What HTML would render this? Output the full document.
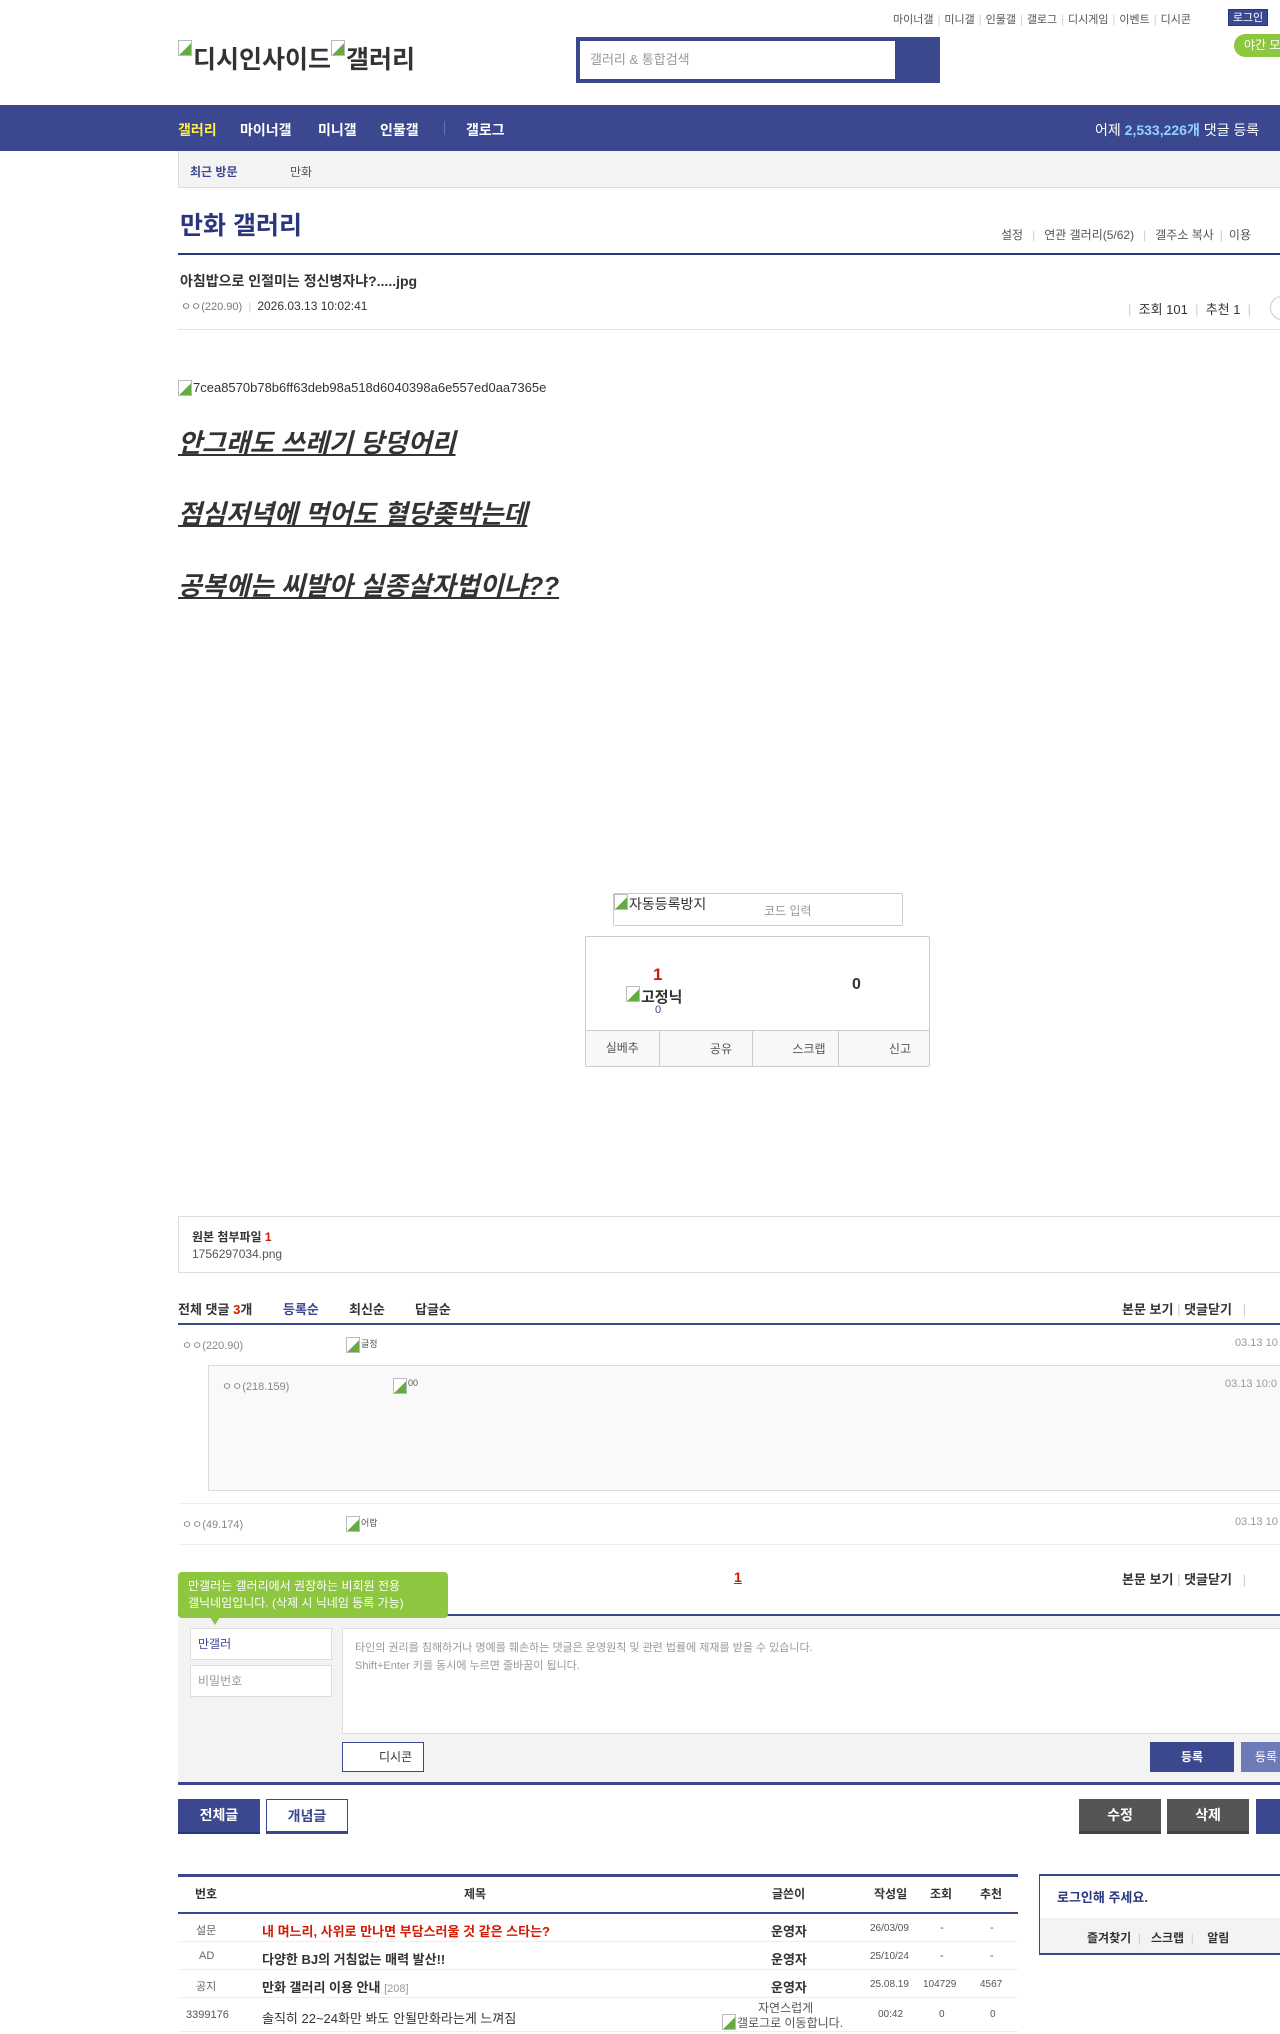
<!DOCTYPE html>
<html><head><meta charset="utf-8">
<style>
*{margin:0;padding:0;box-sizing:border-box}
html,body{width:1280px;height:2034px;overflow:hidden;background:#fff;font-family:"Liberation Sans","Noto Sans CJK KR",sans-serif;color:#333;font-size:12px}
.a{position:absolute;white-space:nowrap}
.bi{display:inline-block;width:14px;height:16px;border:1px solid #bbb;vertical-align:top;margin-right:1px;background:linear-gradient(135deg,#fff 55%,#6a4 55%)}
.sep{color:#ccc;margin:0 4px}
</style></head><body>
<!-- top links -->
<div class="a" style="left:893px;top:11px;font-size:11px;color:#555">마이너갤<span class="sep">|</span>미니갤<span class="sep">|</span>인물갤<span class="sep">|</span>갤로그<span class="sep">|</span>디시게임<span class="sep">|</span>이벤트<span class="sep">|</span>디시콘</div>
<div class="a" style="left:1228px;top:9px;width:40px;height:17px;background:#3b4890;color:#fff;font-size:11px;text-align:center;line-height:17px;border:1px solid #2a3570">로그인</div>
<div class="a" style="left:1234px;top:34px;width:60px;height:23px;background:#8dc63f;border-radius:12px;color:#fff;font-size:12px;line-height:23px;padding-left:10px">야간 모</div>
<div class="a" style="left:178px;top:40px;font-size:25px;color:#333;font-weight:bold"><span class="bi"></span>디시인사이드<span class="bi"></span>갤러리</div>
<div class="a" style="left:576px;top:37px;width:364px;height:46px;background:#3b4890"></div>
<div class="a" style="left:580px;top:41px;width:315px;height:38px;background:#fff;font-size:13px;color:#999;line-height:38px;padding-left:10px">갤러리 &amp; 통합검색</div>
<!-- nav -->
<div class="a" style="left:0;top:105px;width:1280px;height:46px;background:#3b4890"></div>
<div class="a" style="left:178px;top:120px;font-size:14px;font-weight:bold;color:#ffed4a">갤러리</div>
<div class="a" style="left:240px;top:120px;font-size:14px;font-weight:bold;color:#fff">마이너갤</div>
<div class="a" style="left:318px;top:120px;font-size:14px;font-weight:bold;color:#fff">미니갤</div>
<div class="a" style="left:380px;top:120px;font-size:14px;font-weight:bold;color:#fff">인물갤</div>
<div class="a" style="left:444px;top:121px;width:1px;height:14px;background:#6470b0"></div>
<div class="a" style="left:466px;top:120px;font-size:14px;font-weight:bold;color:#fff">갤로그</div>
<div class="a" style="left:1095px;top:120px;font-size:14px;color:#fff">어제 <b style="color:#8fd3ff">2,533,226개</b> 댓글 등록</div>
<div class="a" style="left:178px;top:151px;width:1102px;height:37px;background:#f3f3f3;border-bottom:1px solid #ddd;border-left:1px solid #ddd"></div>
<div class="a" style="left:190px;top:163px;font-size:12px;color:#3b4890;font-weight:bold">최근 방문</div>
<div class="a" style="left:290px;top:163px;font-size:12px;color:#555">만화</div>
<!-- title -->
<div class="a" style="left:180px;top:206px;font-size:25px;color:#29367c;font-weight:bold">만화 갤러리</div>
<div class="a" style="left:1001px;top:226px;font-size:12px;color:#555">설정<span class="sep" style="margin:0 9px">|</span>연관 갤러리(5/62)<span class="sep" style="margin:0 9px">|</span>갤주소 복사<span class="sep" style="margin:0 6px">|</span>이용</div>
<div class="a" style="left:178px;top:253px;width:1102px;height:2px;background:#29367c"></div>
<div class="a" style="left:180px;top:271px;font-size:14px;font-weight:bold;color:#333">아침밥으로 인절미는 정신병자냐?.....jpg</div>
<div class="a" style="left:181px;top:298px;font-size:11px;color:#777">ㅇㅇ(220.90) &nbsp;<span style="color:#ccc">|</span> &nbsp;<span style="color:#333;font-size:12px">2026.03.13 10:02:41</span></div>
<div class="a" style="left:1128px;top:299px;font-size:13px;color:#333"><span style="color:#ccc">|</span> &nbsp;조회 101 &nbsp;<span style="color:#ccc">|</span> &nbsp;추천 1 &nbsp;<span style="color:#ccc">|</span></div>
<div class="a" style="left:1270px;top:296px;width:24px;height:24px;border:1px solid #ccc;border-radius:12px"></div>
<div class="a" style="left:178px;top:329px;width:1102px;height:1px;background:#e5e5e5"></div>
<!-- body -->
<div class="a" style="left:178px;top:380px;font-size:13px;color:#333"><span class="bi"></span>7cea8570b78b6ff63deb98a518d6040398a6e557ed0aa7365e</div>
<div class="a" style="left:178px;top:423px;font-size:26px;font-style:italic;font-weight:bold;text-decoration:underline;color:#333">안그래도 쓰레기 당덩어리</div>
<div class="a" style="left:178px;top:494px;font-size:26px;font-style:italic;font-weight:bold;text-decoration:underline;color:#333">점심저녁에 먹어도 혈당좆박는데</div>
<div class="a" style="left:178px;top:566px;font-size:26px;font-style:italic;font-weight:bold;text-decoration:underline;color:#333">공복에는 씨발아 실종살자법이냐??</div>
<!-- captcha -->
<div class="a" style="left:613px;top:893px;width:290px;height:33px;border:1px solid #ccc;border-radius:2px"></div>
<div class="a" style="left:614px;top:894px;font-size:14px;color:#333"><span class="bi"></span>자동등록방지</div>
<div class="a" style="left:764px;top:902px;font-size:12px;color:#999">코드 입력</div>
<!-- recommend -->
<div class="a" style="left:585px;top:936px;width:345px;height:131px;border:1px solid #ccc;border-radius:2px"></div>
<div class="a" style="left:653px;top:965px;font-size:17px;color:#d31900;font-weight:bold">1</div>
<div class="a" style="left:626px;top:986px;font-size:15px;color:#333;font-weight:bold"><span class="bi"></span>고정닉</div>
<div class="a" style="left:655px;top:1004px;font-size:11px;color:#3b4890">0</div>
<div class="a" style="left:852px;top:976px;font-size:16px;color:#333;font-weight:bold">0</div>
<div class="a" style="left:586px;top:1030px;width:343px;height:36px;background:#f8f8f8;border-top:1px solid #ccc;display:flex">
<div style="flex:1;border-right:1px solid #ccc;font-size:12px;color:#555;text-align:center;line-height:34px">실베추</div>
<div style="flex:1;border-right:1px solid #ccc;font-size:12px;color:#555;text-align:right;padding-right:20px;line-height:36px">공유</div>
<div style="flex:1;border-right:1px solid #ccc;font-size:12px;color:#555;text-align:right;padding-right:12px;line-height:36px">스크랩</div>
<div style="flex:1;font-size:12px;color:#555;text-align:right;padding-right:18px;line-height:36px">신고</div></div>
<!-- attachment -->
<div class="a" style="left:178px;top:1216px;width:1110px;height:57px;border:1px solid #ddd"></div>
<div class="a" style="left:192px;top:1228px;font-size:12px;font-weight:bold;color:#333">원본 첨부파일 <span style="color:#d31900">1</span></div>
<div class="a" style="left:192px;top:1247px;font-size:12px;color:#555">1756297034.png</div>
<!-- comments -->
<div class="a" style="left:178px;top:1299px;font-size:13px;font-weight:bold;color:#333">전체 댓글 <span style="color:#d31900">3</span>개</div>
<div class="a" style="left:283px;top:1299px;font-size:13px;font-weight:bold;color:#3b4890">등록순</div>
<div class="a" style="left:349px;top:1299px;font-size:13px;font-weight:bold;color:#333">최신순</div>
<div class="a" style="left:415px;top:1299px;font-size:13px;font-weight:bold;color:#333">답글순</div>
<div class="a" style="left:1122px;top:1299px;font-size:13px;font-weight:bold;color:#333">본문 보기 <span style="color:#ccc;font-weight:normal">|</span> 댓글닫기 &nbsp;&nbsp;<span style="color:#ccc;font-weight:normal">|</span></div>
<div class="a" style="left:178px;top:1323px;width:1102px;height:2px;background:#3b4890"></div>
<div class="a" style="left:182px;top:1337px;font-size:11px;color:#888">ㅇㅇ(220.90)</div>
<div class="a" style="left:346px;top:1337px;font-size:9px;color:#555"><span class="bi"></span>글정</div>
<div class="a" style="left:1235px;top:1337px;font-size:11px;color:#999">03.13 10</div>
<div class="a" style="left:208px;top:1365px;width:1080px;height:126px;background:#f9f9f9;border:1px solid #ddd"></div>
<div class="a" style="left:222px;top:1378px;font-size:11px;color:#888">ㅇㅇ(218.159)</div>
<div class="a" style="left:393px;top:1378px;font-size:9px;color:#555"><span class="bi"></span>00</div>
<div class="a" style="left:1225px;top:1378px;font-size:11px;color:#999">03.13 10:0</div>
<div class="a" style="left:178px;top:1503px;width:1102px;height:1px;background:#eee"></div>
<div class="a" style="left:182px;top:1516px;font-size:11px;color:#888">ㅇㅇ(49.174)</div>
<div class="a" style="left:346px;top:1516px;font-size:9px;color:#555"><span class="bi"></span>어랍</div>
<div class="a" style="left:1235px;top:1516px;font-size:11px;color:#999">03.13 10</div>
<div class="a" style="left:178px;top:1544px;width:1102px;height:1px;background:#eee"></div>
<div class="a" style="left:734px;top:1569px;font-size:14px;font-weight:bold;color:#d31900;text-decoration:underline">1</div>
<div class="a" style="left:1122px;top:1569px;font-size:13px;font-weight:bold;color:#333">본문 보기 <span style="color:#ccc;font-weight:normal">|</span> 댓글닫기 &nbsp;&nbsp;<span style="color:#ccc;font-weight:normal">|</span></div>
<!-- form -->
<div class="a" style="left:178px;top:1614px;width:1102px;height:171px;background:#f3f3f3;border-top:2px solid #3b4890;border-bottom:3px solid #3b4890"></div>
<div class="a" style="left:178px;top:1572px;width:270px;height:46px;background:#8dc63f;border-radius:4px;color:#fff;font-size:12px;line-height:17px;padding:6px 0 0 10px">만갤러는 갤러리에서 권장하는 비회원 전용<br>갤닉네임입니다. (삭제 시 닉네임 등록 가능)</div>
<div class="a" style="left:210px;top:1617px;width:0;height:0;border-left:5px solid transparent;border-right:5px solid transparent;border-top:8px solid #8dc63f"></div>
<div class="a" style="left:190px;top:1628px;width:142px;height:32px;background:#fff;border:1px solid #ddd;font-size:12px;color:#3b4890;line-height:30px;padding-left:7px">만갤러</div>
<div class="a" style="left:190px;top:1665px;width:142px;height:32px;background:#fff;border:1px solid #ddd;font-size:12px;color:#999;line-height:30px;padding-left:7px">비밀번호</div>
<div class="a" style="left:342px;top:1628px;width:950px;height:106px;background:#fff;border:1px solid #ddd;font-size:11px;color:#999;line-height:18px;padding:10px 12px">타인의 권리를 침해하거나 명예를 훼손하는 댓글은 운영원칙 및 관련 법률에 제재를 받을 수 있습니다.<br>Shift+Enter 키를 동시에 누르면 줄바꿈이 됩니다.</div>
<div class="a" style="left:342px;top:1742px;width:82px;height:30px;background:#fff;border:1px solid #3b4890;font-size:12px;color:#333;line-height:28px;padding-left:36px">디시콘</div>
<div class="a" style="left:1150px;top:1742px;width:84px;height:30px;background:#3b4890;color:#fff;font-size:12px;font-weight:bold;text-align:center;line-height:30px">등록</div>
<div class="a" style="left:1241px;top:1742px;width:60px;height:30px;background:#6f7bb8;color:#fff;font-size:12px;line-height:30px;padding-left:14px">등록</div>
<!-- buttons -->
<div class="a" style="left:178px;top:1799px;width:82px;height:35px;background:#3b4890;color:#fff;font-size:14px;font-weight:bold;text-align:center;line-height:33px;border-bottom:2px solid #29367c">전체글</div>
<div class="a" style="left:266px;top:1799px;width:82px;height:35px;background:#fff;color:#3b4890;font-size:14px;font-weight:bold;text-align:center;line-height:33px;border:1px solid #3b4890;border-bottom:3px solid #3b4890">개념글</div>
<div class="a" style="left:1079px;top:1799px;width:82px;height:35px;background:#555;color:#fff;font-size:14px;font-weight:bold;text-align:center;line-height:33px;border-bottom:3px solid #444">수정</div>
<div class="a" style="left:1167px;top:1799px;width:82px;height:35px;background:#555;color:#fff;font-size:14px;font-weight:bold;text-align:center;line-height:33px;border-bottom:3px solid #444">삭제</div>
<div class="a" style="left:1256px;top:1799px;width:40px;height:35px;background:#3b4890"></div>
<!-- list -->
<div class="a" style="left:178px;top:1874px;width:840px;height:3px;background:#3b4890"></div>
<div class="a" style="left:178px;top:1885px;width:840px;font-size:12px;font-weight:bold;color:#333">
<span class="a" style="left:17px">번호</span><span class="a" style="left:286px">제목</span><span class="a" style="left:594px">글쓴이</span><span class="a" style="left:696px">작성일</span><span class="a" style="left:752px">조회</span><span class="a" style="left:802px">추천</span></div>
<div class="a" style="left:178px;top:1912px;width:840px;height:2px;background:#3b4890"></div>
<div class="a" style="left:178px;top:1941px;width:840px;height:1px;background:#eee"></div>
<div class="a" style="left:178px;top:1969px;width:840px;height:1px;background:#eee"></div>
<div class="a" style="left:178px;top:1997px;width:840px;height:1px;background:#eee"></div>
<div class="a" style="left:178px;top:2031px;width:840px;height:1px;background:#eee"></div>
<div class="a" style="left:196px;top:1922px;font-size:11px;color:#666">설문</div>
<div class="a" style="left:262px;top:1921px;font-size:13px;font-weight:bold;color:#d31900">내 며느리, 사위로 만나면 부담스러울 것 같은 스타는?</div>
<div class="a" style="left:771px;top:1921px;font-size:13px;font-weight:bold;color:#333">운영자</div>
<div class="a" style="left:870px;top:1923px;font-size:10px;color:#555">26/03/09</div>
<div class="a" style="left:940px;top:1922px;font-size:11px;color:#555">-</div><div class="a" style="left:990px;top:1922px;font-size:11px;color:#555">-</div>
<div class="a" style="left:199px;top:1950px;font-size:11px;color:#666">AD</div>
<div class="a" style="left:262px;top:1949px;font-size:13px;font-weight:bold;color:#333">다양한 BJ의 거침없는 매력 발산!!</div>
<div class="a" style="left:771px;top:1949px;font-size:13px;font-weight:bold;color:#333">운영자</div>
<div class="a" style="left:870px;top:1951px;font-size:10px;color:#555">25/10/24</div>
<div class="a" style="left:940px;top:1950px;font-size:11px;color:#555">-</div><div class="a" style="left:990px;top:1950px;font-size:11px;color:#555">-</div>
<div class="a" style="left:196px;top:1978px;font-size:11px;color:#666">공지</div>
<div class="a" style="left:262px;top:1977px;font-size:13px;font-weight:bold;color:#333">만화 갤러리 이용 안내 <span style="font-weight:normal;font-size:11px;color:#999">[208]</span></div>
<div class="a" style="left:771px;top:1977px;font-size:13px;font-weight:bold;color:#333">운영자</div>
<div class="a" style="left:870px;top:1979px;font-size:10px;color:#555">25.08.19</div>
<div class="a" style="left:923px;top:1979px;font-size:10px;color:#555">104729</div><div class="a" style="left:980px;top:1979px;font-size:10px;color:#555">4567</div>
<div class="a" style="left:186px;top:2009px;font-size:11px;color:#555">3399176</div>
<div class="a" style="left:262px;top:2008px;font-size:13px;color:#333">솔직히 22~24화만 봐도 안될만화라는게 느껴짐</div>
<div class="a" style="left:758px;top:1999px;font-size:12px;color:#555">자연스럽게</div>
<div class="a" style="left:722px;top:2014px;font-size:12px;color:#555"><span class="bi"></span>갤로그로 이동합니다.</div>
<div class="a" style="left:878px;top:2009px;font-size:10px;color:#555">00:42</div>
<div class="a" style="left:939px;top:2009px;font-size:10px;color:#555">0</div><div class="a" style="left:990px;top:2009px;font-size:10px;color:#555">0</div>
<!-- login box -->
<div class="a" style="left:1039px;top:1874px;width:260px;height:81px;border:1px solid #3b4890;border-top:2px solid #3b4890;border-bottom:2px solid #3b4890"></div>
<div class="a" style="left:1040px;top:1918px;width:258px;height:35px;background:#f3f3f3"></div>
<div class="a" style="left:1057px;top:1887px;font-size:13px;font-weight:bold;color:#29367c">로그인해 주세요.</div>
<div class="a" style="left:1087px;top:1929px;font-size:12px;font-weight:bold;color:#333">즐겨찾기 <span style="color:#ccc;font-weight:normal">&nbsp;|&nbsp;</span> &nbsp;스크랩 <span style="color:#ccc;font-weight:normal">&nbsp;|&nbsp;</span> &nbsp;&nbsp;알림</div>
</body></html>
